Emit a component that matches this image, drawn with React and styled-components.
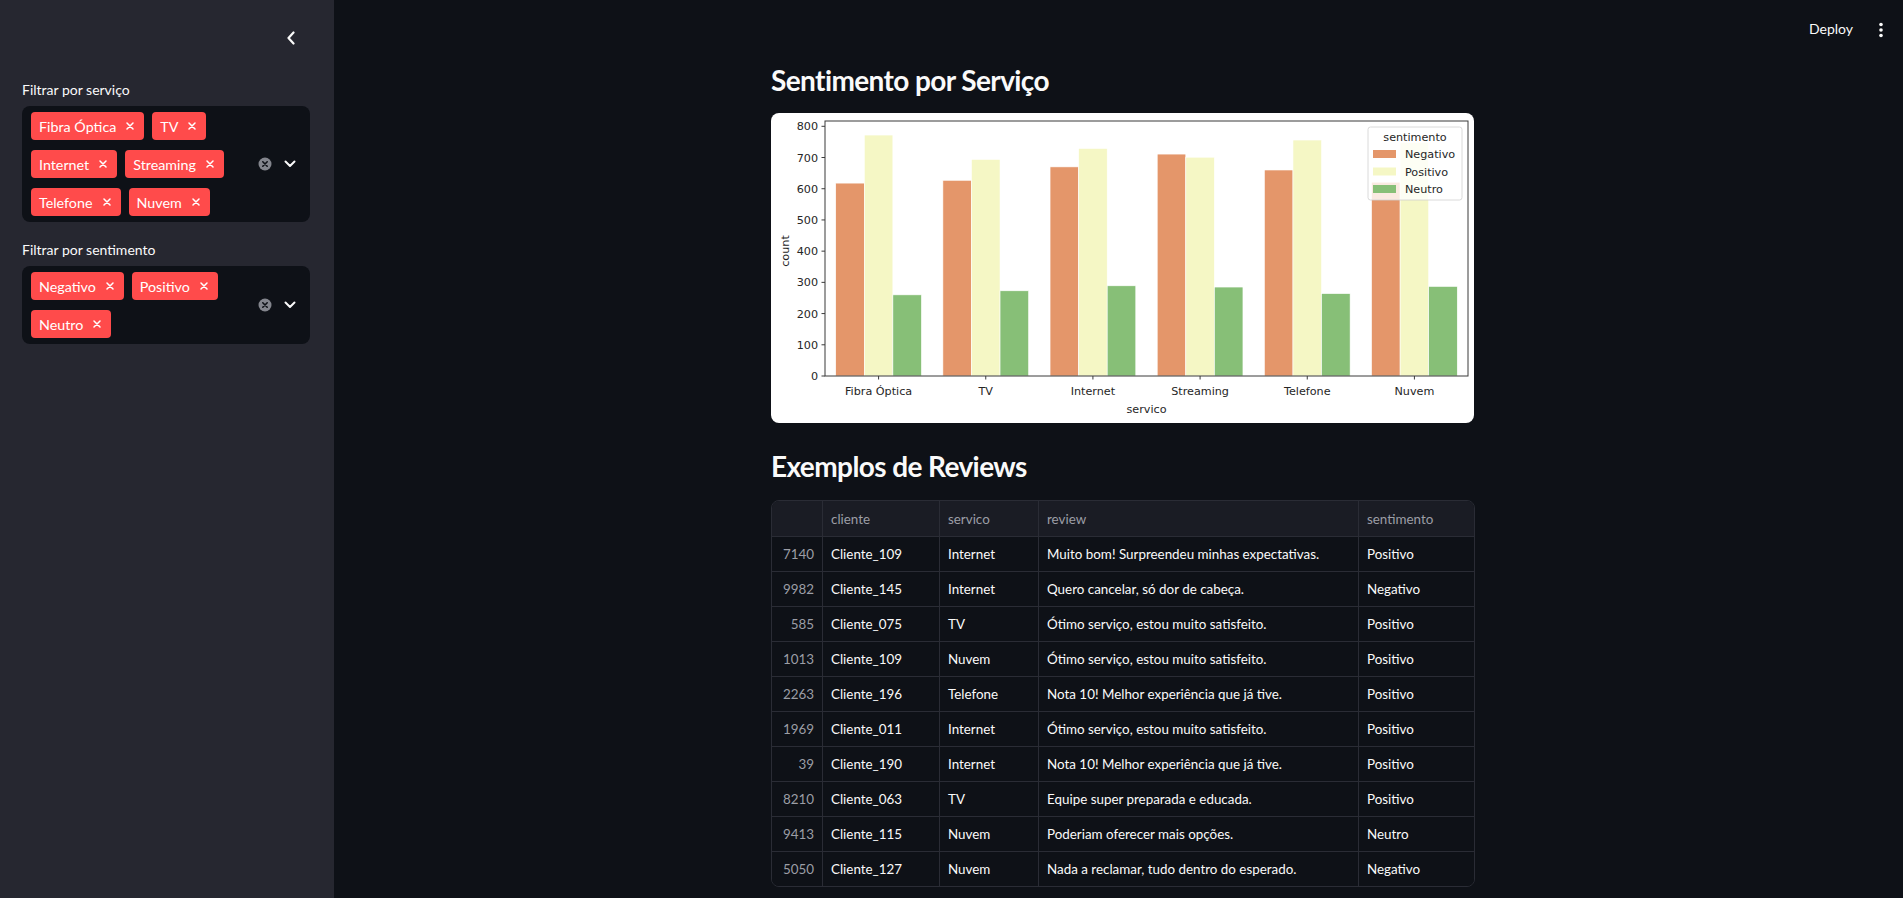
import React from 'react'
import styled, { createGlobalStyle } from 'styled-components'

const GlobalStyle = createGlobalStyle`
  body {
    margin: 0;
    background: #0e1117;
    color: #fafafa;
    font-family: Lato, "Noto Sans", sans-serif;
  }
`

const Pagina = styled.div`
  display: flex;
  min-height: 898px;
  background: #0e1117;
`

const BarraLateral = styled.aside`
  width: 334px;
  flex-shrink: 0;
  background: #262730;
  padding: 0 24px 0 22px;
  box-sizing: border-box;
`

const LinhaRecolher = styled.div`
  height: 80px;
  display: flex;
  justify-content: flex-end;
  padding: 31px 14px 0 0;
  box-sizing: border-box;
`

const Campo = styled.div`
  display: flex;
  flex-direction: column;
  margin-bottom: 18px;
`

const Rotulo = styled.label`
  font-size: 14px;
  line-height: 20px;
  color: #fafafa;
  margin-bottom: 6px;
`

const CaixaSelecao = styled.div`
  display: flex;
  align-items: center;
  background: #0e1117;
  border-radius: 8px;
  padding: 6px 14px 6px 9px;
`

const ListaTags = styled.div`
  flex: 1;
  display: flex;
  flex-wrap: wrap;
  gap: 10px 8px;
`

const Tag = styled.span`
  display: inline-flex;
  align-items: center;
  gap: 10px;
  height: 28px;
  padding: 0 10px 0 8px;
  border-radius: 4px;
  background: #ff4b4b;
  color: #fff;
  font-size: 14.3px;
`

const Icones = styled.div`
  display: flex;
  align-items: center;
  gap: 12px;
  margin-left: 6px;
`

const Principal = styled.main`
  flex: 1;
  display: flex;
  flex-direction: column;
  padding-left: 9px;
`

const Topo = styled.header`
  height: 60px;
  display: flex;
  align-items: center;
  justify-content: flex-end;
  padding: 0 20px 0 0;
  gap: 26px;
`

const BotaoDeploy = styled.span`
  font-size: 14px;
  color: #fafafa;
  margin-bottom: 4px;
`

const Conteudo = styled.div`
  width: 704px;
  margin: 0 auto;
  display: flex;
  flex-direction: column;
`

const Titulo = styled.h2`
  font-size: 28px;
  line-height: 34px;
  font-weight: 700;
  margin: ${p => p.$topo}px 0 ${p => p.$baixo}px;
  color: #fafafa;
  letter-spacing: -0.6px;
`

const CartaoGrafico = styled.div`
  width: 703px;
  height: 310px;
  background: #fff;
  border-radius: 8px;
  overflow: hidden;
`

const Tabela = styled.div`
  display: grid;
  grid-template-columns: 51px 117px 99px 320px 1fr;
  border: 1px solid #2a2c35;
  border-radius: 8px;
  overflow: hidden;
  font-size: 13.4px;
`

const Celula = styled.div`
  height: ${p => (p.$cabecalho ? 35 : 34)}px;
  display: flex;
  align-items: center;
  justify-content: ${p => (p.$indice ? 'flex-end' : 'flex-start')};
  padding: 0 8px;
  border-right: ${p => (p.$ultima ? 'none' : '1px solid #2a2c35')};
  border-bottom: ${p => (p.$fim ? 'none' : '1px solid #2a2c35')};
  background: ${p => (p.$cabecalho ? '#1a1c24' : '#0e1117')};
  color: ${p => (p.$cabecalho || p.$indice ? '#9c9ea6' : '#fafafa')};
  white-space: nowrap;
  overflow: hidden;
`

const servicos = ['Fibra Óptica', 'TV', 'Internet', 'Streaming', 'Telefone', 'Nuvem']
const sentimentos = ['Negativo', 'Positivo', 'Neutro']
const cores = ['#e4966a', '#f5f7c5', '#87bf77']

const contagens = [
  [618, 772, 260],
  [627, 694, 273],
  [670, 729, 289],
  [711, 701, 285],
  [660, 756, 264],
  [621, 748, 287],
]

const linhas = [
  ['7140', 'Cliente_109', 'Internet', 'Muito bom! Surpreendeu minhas expectativas.', 'Positivo'],
  ['9982', 'Cliente_145', 'Internet', 'Quero cancelar, só dor de cabeça.', 'Negativo'],
  ['585', 'Cliente_075', 'TV', 'Ótimo serviço, estou muito satisfeito.', 'Positivo'],
  ['1013', 'Cliente_109', 'Nuvem', 'Ótimo serviço, estou muito satisfeito.', 'Positivo'],
  ['2263', 'Cliente_196', 'Telefone', 'Nota 10! Melhor experiência que já tive.', 'Positivo'],
  ['1969', 'Cliente_011', 'Internet', 'Ótimo serviço, estou muito satisfeito.', 'Positivo'],
  ['39', 'Cliente_190', 'Internet', 'Nota 10! Melhor experiência que já tive.', 'Positivo'],
  ['8210', 'Cliente_063', 'TV', 'Equipe super preparada e educada.', 'Positivo'],
  ['9413', 'Cliente_115', 'Nuvem', 'Poderiam oferecer mais opções.', 'Neutro'],
  ['5050', 'Cliente_127', 'Nuvem', 'Nada a reclamar, tudo dentro do esperado.', 'Negativo'],
]

const colunas = ['', 'cliente', 'servico', 'review', 'sentimento']

const Xis = () => (
  <svg width="8" height="8" viewBox="0 0 8 8">
    <path d="M1 1L7 7M7 1L1 7" stroke="#fff" strokeWidth="1.5" strokeLinecap="round" />
  </svg>
)

const Limpar = () => (
  <svg width="14" height="14" viewBox="0 0 14 14">
    <circle cx="7" cy="7" r="6.5" fill="#83858d" />
    <path d="M4.8 4.8L9.2 9.2M9.2 4.8L4.8 9.2" stroke="#0e1117" strokeWidth="1.6" strokeLinecap="round" />
  </svg>
)

const SetaBaixo = () => (
  <svg width="12" height="8" viewBox="0 0 12 8">
    <path d="M1.5 1.5L6 6L10.5 1.5" fill="none" stroke="#fafafa" strokeWidth="2" strokeLinecap="round" strokeLinejoin="round" />
  </svg>
)

const SetaEsquerda = () => (
  <svg width="10" height="14" viewBox="0 0 10 14">
    <path d="M7.5 1.5L2.5 7L7.5 12.5" fill="none" stroke="#fafafa" strokeWidth="2.2" strokeLinecap="round" strokeLinejoin="round" />
  </svg>
)

const Kebab = () => (
  <svg width="4" height="16" viewBox="0 0 4 16">
    <circle cx="2" cy="2.5" r="1.8" fill="#fafafa" />
    <circle cx="2" cy="8" r="1.8" fill="#fafafa" />
    <circle cx="2" cy="13.5" r="1.8" fill="#fafafa" />
  </svg>
)

const MultiSelecao = ({ rotulo, itens }) => (
  <Campo>
    <Rotulo>{rotulo}</Rotulo>
    <CaixaSelecao>
      <ListaTags>
        {itens.map(item => (
          <Tag key={item}>
            {item}
            <Xis />
          </Tag>
        ))}
      </ListaTags>
      <Icones>
        <Limpar />
        <SetaBaixo />
      </Icones>
    </CaixaSelecao>
  </Campo>
)

const GraficoBarras = () => {
  const x0 = 54, x1 = 697, y0 = 8, y1 = 263
  const escala = (y1 - 13.3) / 800
  const largCat = (x1 - x0) / 6
  const largBarra = (largCat * 0.8) / 3
  const fonte = { fontFamily: '"DejaVu Sans", sans-serif', fontSize: 11.2, fill: '#262626' }

  return (
    <svg width="703" height="310" viewBox="0 0 703 310">
      {contagens.map((grupo, i) => {
        const centro = x0 + largCat * (i + 0.5)
        return grupo.map((v, j) => (
          <rect
            key={`${i}-${j}`}
            x={centro - largBarra * 1.5 + largBarra * j}
            y={y1 - v * escala}
            width={largBarra}
            height={v * escala}
            fill={cores[j]}
            stroke="#ffffff"
            strokeWidth="0.6"
          />
        ))
      })}

      {[0, 100, 200, 300, 400, 500, 600, 700, 800].map(t => {
        const y = y1 - t * escala
        return (
          <g key={t}>
            <line x1={x0 - 3.5} x2={x0} y1={y} y2={y} stroke="#262626" strokeWidth="0.9" />
            <text x={x0 - 7} y={y + 4} textAnchor="end" {...fonte}>{t}</text>
          </g>
        )
      })}

      {servicos.map((s, i) => {
        const cx = x0 + largCat * (i + 0.5)
        return (
          <g key={s}>
            <line x1={cx} x2={cx} y1={y1} y2={y1 + 3.5} stroke="#262626" strokeWidth="0.9" />
            <text x={cx} y={282} textAnchor="middle" {...fonte}>{s}</text>
          </g>
        )
      })}

      <rect x={x0} y={y0} width={x1 - x0} height={y1 - y0} fill="none" stroke="#3a3a3a" strokeWidth="1" />

      <text x={(x0 + x1) / 2} y={300} textAnchor="middle" {...fonte}>servico</text>
      <text x={18} y={138} textAnchor="middle" transform="rotate(-90 18 138)" {...fonte}>count</text>

      <rect x="597" y="14" width="94" height="73" rx="2.5" fill="#ffffff" fillOpacity="0.8" stroke="#d0d0d0" strokeWidth="0.8" />
      <text x="644" y="28" textAnchor="middle" {...fonte}>sentimento</text>
      {sentimentos.map((s, j) => {
        const cy = 41 + j * 17.5
        return (
          <g key={s}>
            <rect x="602" y={cy - 4} width="23" height="8" fill={cores[j]} />
            <text x="634" y={cy + 4} {...fonte}>{s}</text>
          </g>
        )
      })}
    </svg>
  )
}

const TabelaReviews = () => (
  <Tabela>
    {colunas.map((c, i) => (
      <Celula key={`h${i}`} $cabecalho $ultima={i === colunas.length - 1}>
        {c}
      </Celula>
    ))}
    {linhas.map((linha, r) =>
      linha.map((valor, i) => (
        <Celula
          key={`${r}-${i}`}
          $indice={i === 0}
          $ultima={i === linha.length - 1}
          $fim={r === linhas.length - 1}
        >
          {valor}
        </Celula>
      ))
    )}
  </Tabela>
)

export default function App() {
  return (
    <>
      <GlobalStyle />
      <Pagina>
        <BarraLateral>
          <LinhaRecolher>
            <SetaEsquerda />
          </LinhaRecolher>
          <MultiSelecao rotulo="Filtrar por serviço" itens={servicos} />
          <MultiSelecao rotulo="Filtrar por sentimento" itens={sentimentos} />
        </BarraLateral>
        <Principal>
          <Topo>
            <BotaoDeploy>Deploy</BotaoDeploy>
            <Kebab />
          </Topo>
          <Conteudo>
            <Titulo $topo={3} $baixo={16}>Sentimento por Serviço</Titulo>
            <CartaoGrafico>
              <GraficoBarras />
            </CartaoGrafico>
            <Titulo $topo={26} $baixo={17}>Exemplos de Reviews</Titulo>
            <TabelaReviews />
          </Conteudo>
        </Principal>
      </Pagina>
    </>
  )
}
